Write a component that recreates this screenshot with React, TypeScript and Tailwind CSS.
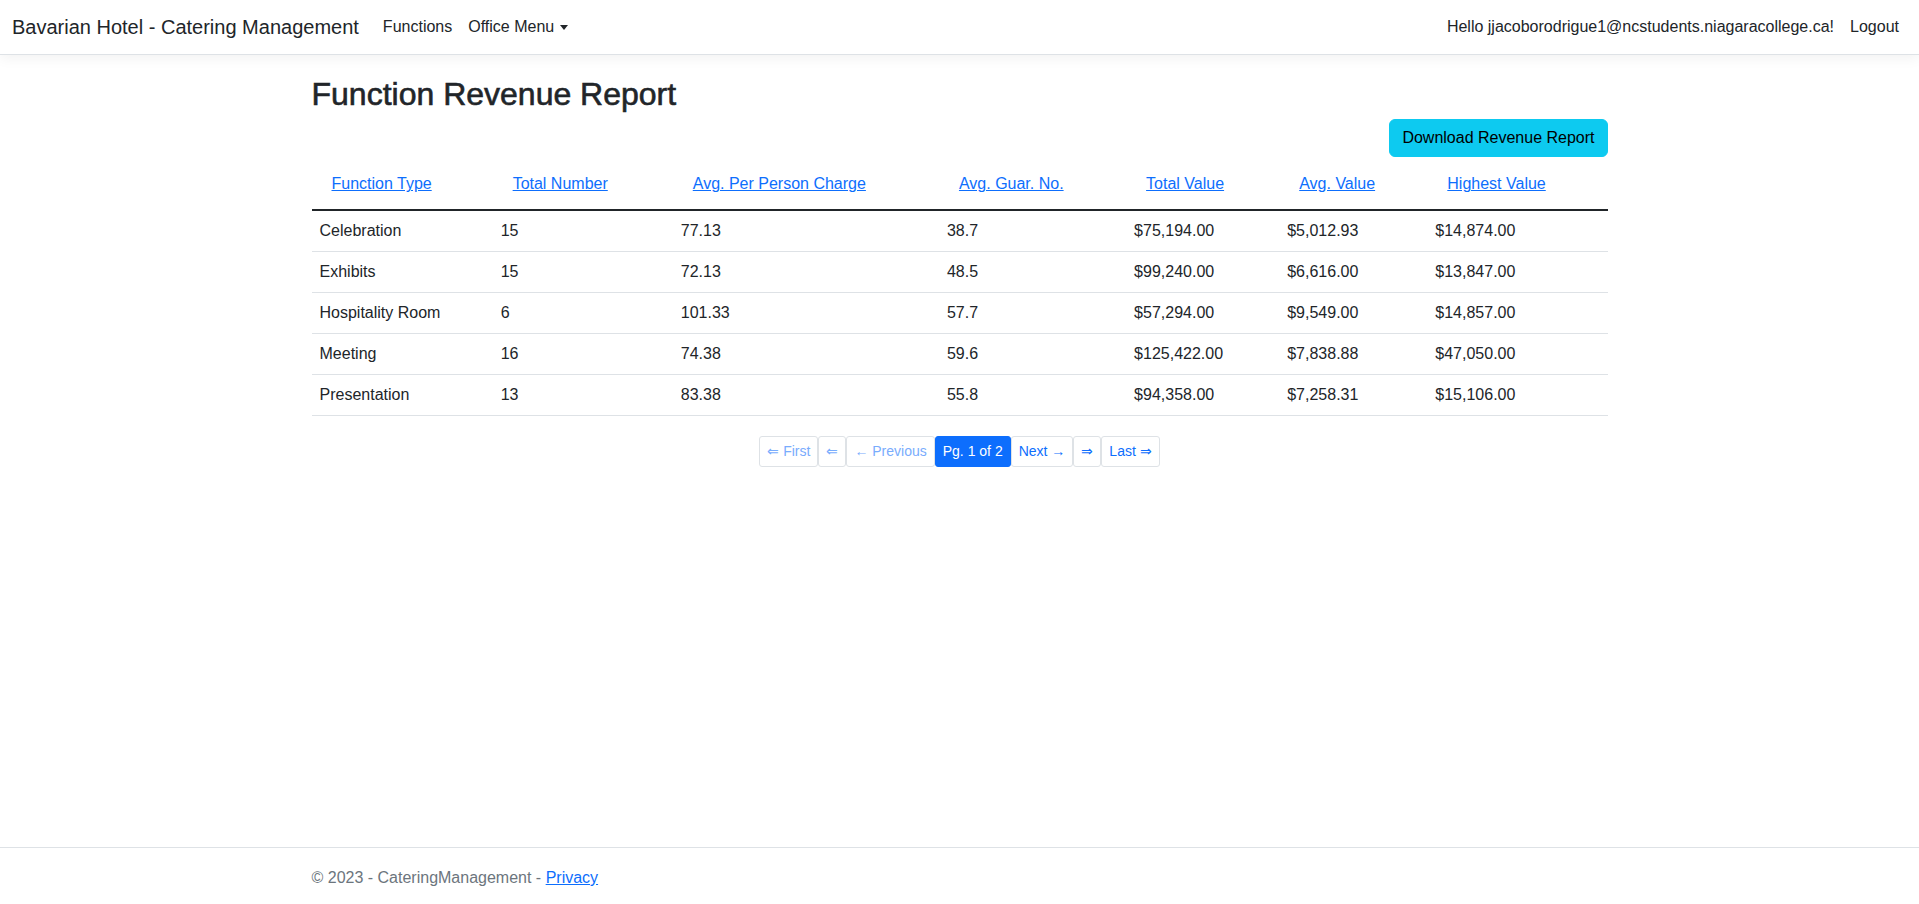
import React from "react"

const font = { fontFamily: "'Liberation Sans', Arial, sans-serif" }

const rows = [
  ["Celebration", "15", "77.13", "38.7", "$75,194.00", "$5,012.93", "$14,874.00"],
  ["Exhibits", "15", "72.13", "48.5", "$99,240.00", "$6,616.00", "$13,847.00"],
  ["Hospitality Room", "6", "101.33", "57.7", "$57,294.00", "$9,549.00", "$14,857.00"],
  ["Meeting", "16", "74.38", "59.6", "$125,422.00", "$7,838.88", "$47,050.00"],
  ["Presentation", "13", "83.38", "55.8", "$94,358.00", "$7,258.31", "$15,106.00"],
]

const columns = [
  { label: "Function Type", width: "w-[181px]" },
  { label: "Total Number", width: "w-[180px]" },
  { label: "Avg. Per Person Charge", width: "w-[266px]" },
  { label: "Avg. Guar. No.", width: "w-[187px]" },
  { label: "Total Value", width: "w-[153px]" },
  { label: "Avg. Value", width: "w-[148px]" },
  { label: "Highest Value", width: "w-[180px]" },
]

const pages = [
  { label: "⇐ First", state: "disabled" },
  { label: "⇐", state: "disabled" },
  { label: "← Previous", state: "disabled" },
  { label: "Pg. 1 of 2", state: "active" },
  { label: "Next →", state: "normal" },
  { label: "⇒", state: "normal" },
  { label: "Last ⇒", state: "normal" },
]

export default function App() {
  return (
    <div className="h-screen overflow-hidden flex flex-col bg-white text-[#212529] text-base leading-6" style={font}>
      {/* Navbar */}
      <header className="bg-white border-b border-[#dee2e6] shadow-[0_4px_12px_rgba(0,0,0,0.05)] mb-5 relative z-10">
        <div className="h-[54px] px-3 flex items-center justify-between">
          <div className="flex items-center">
            <a href="#" className="text-[20px] leading-[30px] text-[#212529] mr-4">
              Bavarian Hotel - Catering Management
            </a>
            <nav className="flex items-center">
              <a href="#" className="px-2 py-2 text-[#212529]">Functions</a>
              <button className="px-2 py-2 text-[#212529] flex items-center">
                Office Menu
                <span className="ml-[6px] inline-block w-0 h-0 border-t-[5px] border-x-[4.5px] border-x-transparent border-t-[#212529]" />
              </button>
            </nav>
          </div>
          <nav className="flex items-center">
            <a href="#" className="px-2 py-2 text-[#212529]">Hello jjacoborodrigue1@ncstudents.niagaracollege.ca!</a>
            <a href="#" className="px-2 py-2 text-[#212529]">Logout</a>
          </nav>
        </div>
      </header>

      {/* Main */}
      <main className="flex-1">
        <div className="max-w-[1320px] mx-auto px-3">
          <h2 className="text-[32px] font-medium leading-[1.2] mb-1.5 [-webkit-text-stroke:0.6px_#212529]">
            Function Revenue Report
          </h2>
          <div className="flex justify-end">
            <button className="bg-[#0dcaf0] border border-[#0dcaf0] text-black rounded-md px-3 py-1.5 leading-6">
              Download Revenue Report
            </button>
          </div>

          <table className="w-full table-fixed border-collapse">
            <thead>
              <tr>
                {columns.map((c) => (
                  <th key={c.label} className={`${c.width} px-2 pt-[9px] pb-[7px] text-left font-normal align-bottom`}>
                    <a href="#" className="inline-block px-3 py-1.5 text-[#0d6efd] underline leading-6">
                      {c.label}
                    </a>
                  </th>
                ))}
              </tr>
            </thead>
            <tbody className="border-t-2 border-[#212529]">
              {rows.map((r) => (
                <tr key={r[0]} className="border-b border-[#dee2e6]">
                  {r.map((cell, i) => (
                    <td key={i} className="p-2 leading-6">{cell}</td>
                  ))}
                </tr>
              ))}
            </tbody>
          </table>

          {/* Pagination */}
          <div className="flex justify-center mt-5">
            {pages.map((p) => (
              <span
                key={p.label}
                className={`px-[7px] py-1 text-[14px] leading-[21px] border rounded-[3px] ${
                  p.state === "active"
                    ? "bg-[#0d6efd] border-[#0d6efd] text-white"
                    : p.state === "disabled"
                      ? "bg-white border-[#dee2e6] text-[#79acfd]"
                      : "bg-white border-[#dee2e6] text-[#0d6efd]"
                }`}
              >
                {p.label}
              </span>
            ))}
          </div>
        </div>
      </main>

      {/* Footer */}
      <footer className="h-[57px] border-t border-[#dee2e6] text-[#6c757d] leading-[60px] whitespace-nowrap">
        <div className="max-w-[1320px] mx-auto px-3">
          © 2023 - CateringManagement - <a href="#" className="text-[#0d6efd] underline">Privacy</a>
        </div>
      </footer>
    </div>
  )
}
